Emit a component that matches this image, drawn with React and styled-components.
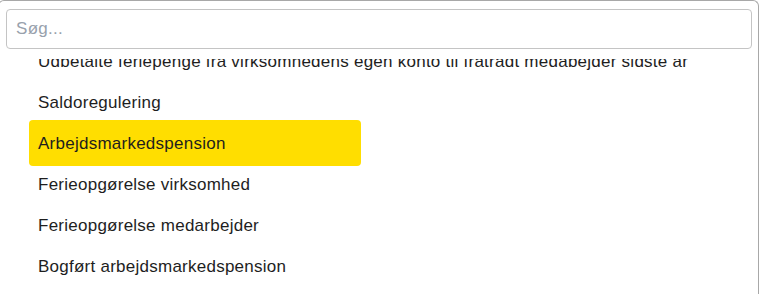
import React, { useState } from "react";
import styled, { createGlobalStyle } from "styled-components";

const GlobalStyle = createGlobalStyle`
    body {
        margin: 0;
        background: #fff;
        font-family: "Liberation Sans", Arial, sans-serif;
    }
`

const Panel = styled.div`
    box-sizing: border-box;
    margin-left: -2px;
    width: 761px;
    height: 294px;
    border: 1px solid #a8a8a8;
    border-bottom: none;
    border-radius: 6px 6px 0 0;
    padding: 8px 6px 0 7px;
    display: flex;
    flex-direction: column;
    gap: 10px;
    overflow: hidden;
`

const SearchInput = styled.input`
    box-sizing: border-box;
    width: 100%;
    height: 40px;
    border: 1px solid #c4c4c4;
    border-radius: 4px;
    padding: 0 9px;
    font-family: "Liberation Sans", Arial, sans-serif;
    font-size: 17px;
    letter-spacing: 0.3px;
    color: #222;
    outline: none;
    &::placeholder {
        color: #98a1ac;
    }
`

const List = styled.ul`
    list-style: none;
    margin: 0;
    padding: 0 0 0 23px;
    flex: 1;
    overflow: hidden;
`

const Scroller = styled.div`
    margin-top: -18px;
`

const Item = styled.li`
    box-sizing: border-box;
    width: ${(p) => (p.$active ? "332px" : "auto")};
    padding: ${(p) => (p.$active ? "13px 9px 12px" : "10px 9px")};
    margin: ${(p) => (p.$active ? "-3px 0 -2px" : "0")};
    line-height: 21px;
    font-size: 17px;
    letter-spacing: 0.25px;
    color: #1e1e1e;
    background: ${(p) => (p.$active ? "#ffde00" : "transparent")};
    border-radius: 4px;
    white-space: nowrap;
    cursor: pointer;
`

const items = [
    "Udbetalte feriepenge fra virksomhedens egen konto til fratrådt medabejder sidste år",
    "Saldoregulering",
    "Arbejdsmarkedspension",
    "Ferieopgørelse virksomhed",
    "Ferieopgørelse medarbejder",
    "Bogført arbejdsmarkedspension",
]

const App = () => {
    const [query, setQuery] = useState("");
    const [active, setActive] = useState(2);

    return (
        <>
            <GlobalStyle />
            <Panel>
                <SearchInput
                    placeholder="Søg..."
                    value={query}
                    onChange={(e) => setQuery(e.target.value)}
                />
                <List>
                    <Scroller>
                        {items.map((label, i) => (
                            <Item key={label} $active={i === active} onMouseEnter={() => setActive(i)}>
                                {label}
                            </Item>
                        ))}
                    </Scroller>
                </List>
            </Panel>
        </>
    );
};

export default App;
